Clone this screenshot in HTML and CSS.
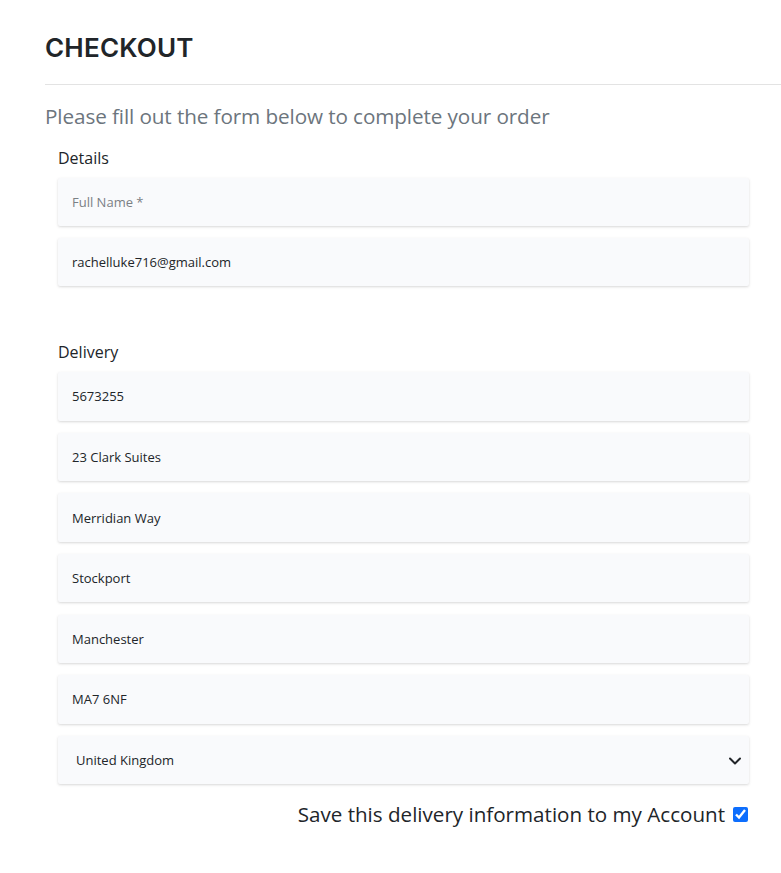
FILE: index.html
```html
<!DOCTYPE html>
<html lang="en">
<head>
<meta charset="utf-8">
<title>Checkout</title>
<link rel="stylesheet" href="styles.css">
</head>
<body>
<main class="page">
  <h1 class="title">CHECKOUT</h1>
  <hr class="rule">
  <p class="lead">Please fill out the form below to complete your order</p>
  <form class="form">
    <section class="group">
      <h2 class="legend">Details</h2>
      <input class="field" type="text" placeholder="Full Name *">
      <input class="field" type="email" value="rachelluke716@gmail.com">
    </section>
    <section class="group group-delivery">
      <h2 class="legend">Delivery</h2>
      <input class="field" type="text" value="5673255">
      <input class="field" type="text" value="23 Clark Suites">
      <input class="field" type="text" value="Merridian Way">
      <input class="field" type="text" value="Stockport">
      <input class="field" type="text" value="Manchester">
      <input class="field" type="text" value="MA7 6NF">
      <div class="select-wrap">
        <select class="field select">
          <option>United Kingdom</option>
        </select>
        <svg class="chevron" width="12" height="8" viewBox="0 0 12 8"><path d="M1 1.5 L6 6.5 L11 1.5" fill="none" stroke="#212529" stroke-width="2" stroke-linecap="round" stroke-linejoin="round"/></svg>
      </div>
      <label class="save">Save this delivery information to my Account <input class="check" type="checkbox" checked></label>
    </section>
  </form>
</main>
</body>
</html>
```

FILE: styles.css
```css
html, body {
  margin: 0;
  padding: 0;
  background: #fff;
}
body {
  font-family: "Open Sans", "Noto Sans", sans-serif;
  color: #212529;
}
.page {
  padding: 30px 0 0 45px;
}
.title {
  margin: 0;
  font-family: Inter, "Liberation Sans", sans-serif;
  font-weight: 600;
  font-size: 26px;
  line-height: 36px;
  letter-spacing: 0.2px;
  color: #212529;
}
.rule {
  margin: 18px 0 0 0;
  border: 0;
  border-top: 1px solid #e3e3e3;
  height: 0;
}
.lead {
  margin: 16px 0 0 0;
  font-size: 20.7px;
  line-height: 30px;
  color: #6c757d;
  letter-spacing: -0.1px;
}
.form {
  padding: 0 32px 0 13px;
}
.group {
  margin: 15px 0 0 0;
  display: flex;
  flex-direction: column;
  gap: 12px;
}
.group-delivery {
  margin-top: 54px;
  gap: 12.3px;
}
.legend {
  margin: 0 0 -4px 0;
  font-size: 16px;
  font-weight: 400;
  line-height: 24px;
  color: #212529;
}
.field {
  display: block;
  box-sizing: border-box;
  width: 100%;
  height: 48px;
  padding: 0 14px;
  border: 0;
  border-radius: 2px;
  background: #f9fafc;
  box-shadow: 0 1px 3px rgba(0, 0, 0, 0.12), 0 1px 2px rgba(0, 0, 0, 0.04);
  font-family: "Open Sans", "Noto Sans", sans-serif;
  font-size: 13px;
  color: #212529;
  outline: none;
}
.group-delivery .field {
  height: 48.3px;
}
.field::placeholder {
  color: #7b8085;
}
.select-wrap {
  position: relative;
}
.select {
  appearance: none;
  -webkit-appearance: none;
  padding-left: 18px;
}
.chevron {
  position: absolute;
  right: 8px;
  top: 21px;
}
.save {
  display: flex;
  justify-content: flex-end;
  align-items: center;
  gap: 8px;
  margin-top: 3px;
  font-size: 20.6px;
  line-height: 30px;
  color: #212529;
}
.check {
  margin: 0 1px 0 0;
  width: 15px;
  height: 15px;
  accent-color: #0d6efd;
}
```
